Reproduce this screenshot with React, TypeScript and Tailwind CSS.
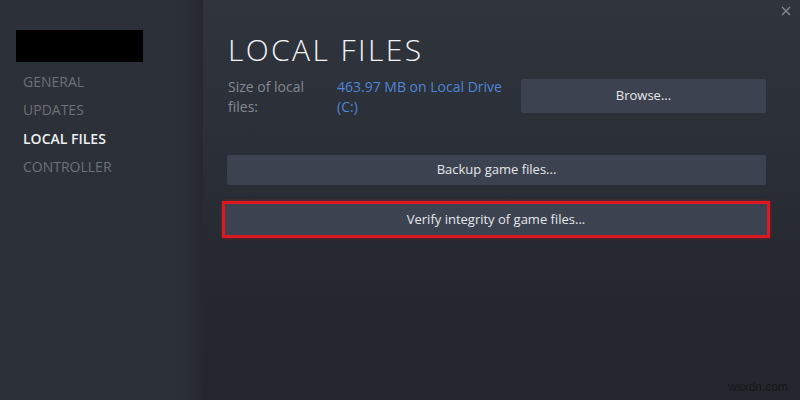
import React from "react";

export default function App() {
  const nav = [
    { label: "GENERAL", active: false },
    { label: "UPDATES", active: false },
    { label: "LOCAL FILES", active: true },
    { label: "CONTROLLER", active: false },
  ];
  return (
    <div className="w-[800px] h-[400px] flex overflow-hidden font-['Open_Sans',sans-serif]">
      <div className="w-[203px] h-full flex flex-col bg-[linear-gradient(to_right,#2c3038_0%,#2b2f37_90%,#25282f_100%)]">
        <div className="ml-[16px] mt-[30px] w-[127px] h-[32px] bg-black" />
        <div className="mt-[5px] flex flex-col pl-[23px]">
          {nav.map((n) => (
            <div
              key={n.label}
              className={
                n.active
                  ? "h-[28.5px] flex items-center text-[14px] font-semibold text-[#eef0f2]"
                  : "h-[28.5px] flex items-center text-[14px] text-[#6c717a]"
              }
            >
              {n.label}
            </div>
          ))}
        </div>
      </div>
      <div className="relative flex-1 h-full flex flex-col pl-[24px] bg-[linear-gradient(to_bottom,#30343d_0%,#2a2e36_40%,#24272e_75%,#23262d_100%)]">
        <svg
          className="absolute right-[9px] top-[6px]"
          width="10"
          height="10"
          viewBox="0 0 10 10"
        >
          <path d="M1 1 L9 9 M9 1 L1 9" stroke="#868b93" strokeWidth="1.3" />
        </svg>
        <div className="mt-[35px] ml-[1px] h-[30px] leading-[30px] text-[30px] font-light tracking-[2.4px] text-[#f2f3f5]">
          LOCAL FILES
        </div>
        <div className="mt-[12px] ml-[1px] flex items-start">
          <div className="w-[109px] text-[14px] leading-[19.5px] text-[#858a92]">
            Size of local
            <br />
            files:
          </div>
          <div className="w-[180px] text-[14px] leading-[19.5px] text-[#4f86d6]">
            463.97 MB on Local Drive (C:)
          </div>
          <button className="ml-[4px] mt-[2px] w-[245px] h-[34px] rounded-[2px] bg-[#3d4250] text-[13px] text-[#e4e7ea]">
            Browse...
          </button>
        </div>
        <button className="mt-[39px] w-[539px] h-[30px] rounded-[2px] bg-[#3d4250] text-[13px] text-[#e4e7ea]">
          Backup game files...
        </button>
        <div className="mt-[16px] -ml-[5px] w-[548px] h-[37px] border-[3px] border-[#dc1821] shadow-[0_0_3px_rgba(220,24,33,0.6)] bg-[#3d4250] flex items-center justify-center text-[13px] text-[#e4e7ea]">
          Verify integrity of game files...
        </div>
        <div className="absolute right-[12px] bottom-[4px] text-[12px] text-[#15171b] font-['Liberation_Sans',sans-serif]">
          wsxdn.com
        </div>
      </div>
    </div>
  );
}
